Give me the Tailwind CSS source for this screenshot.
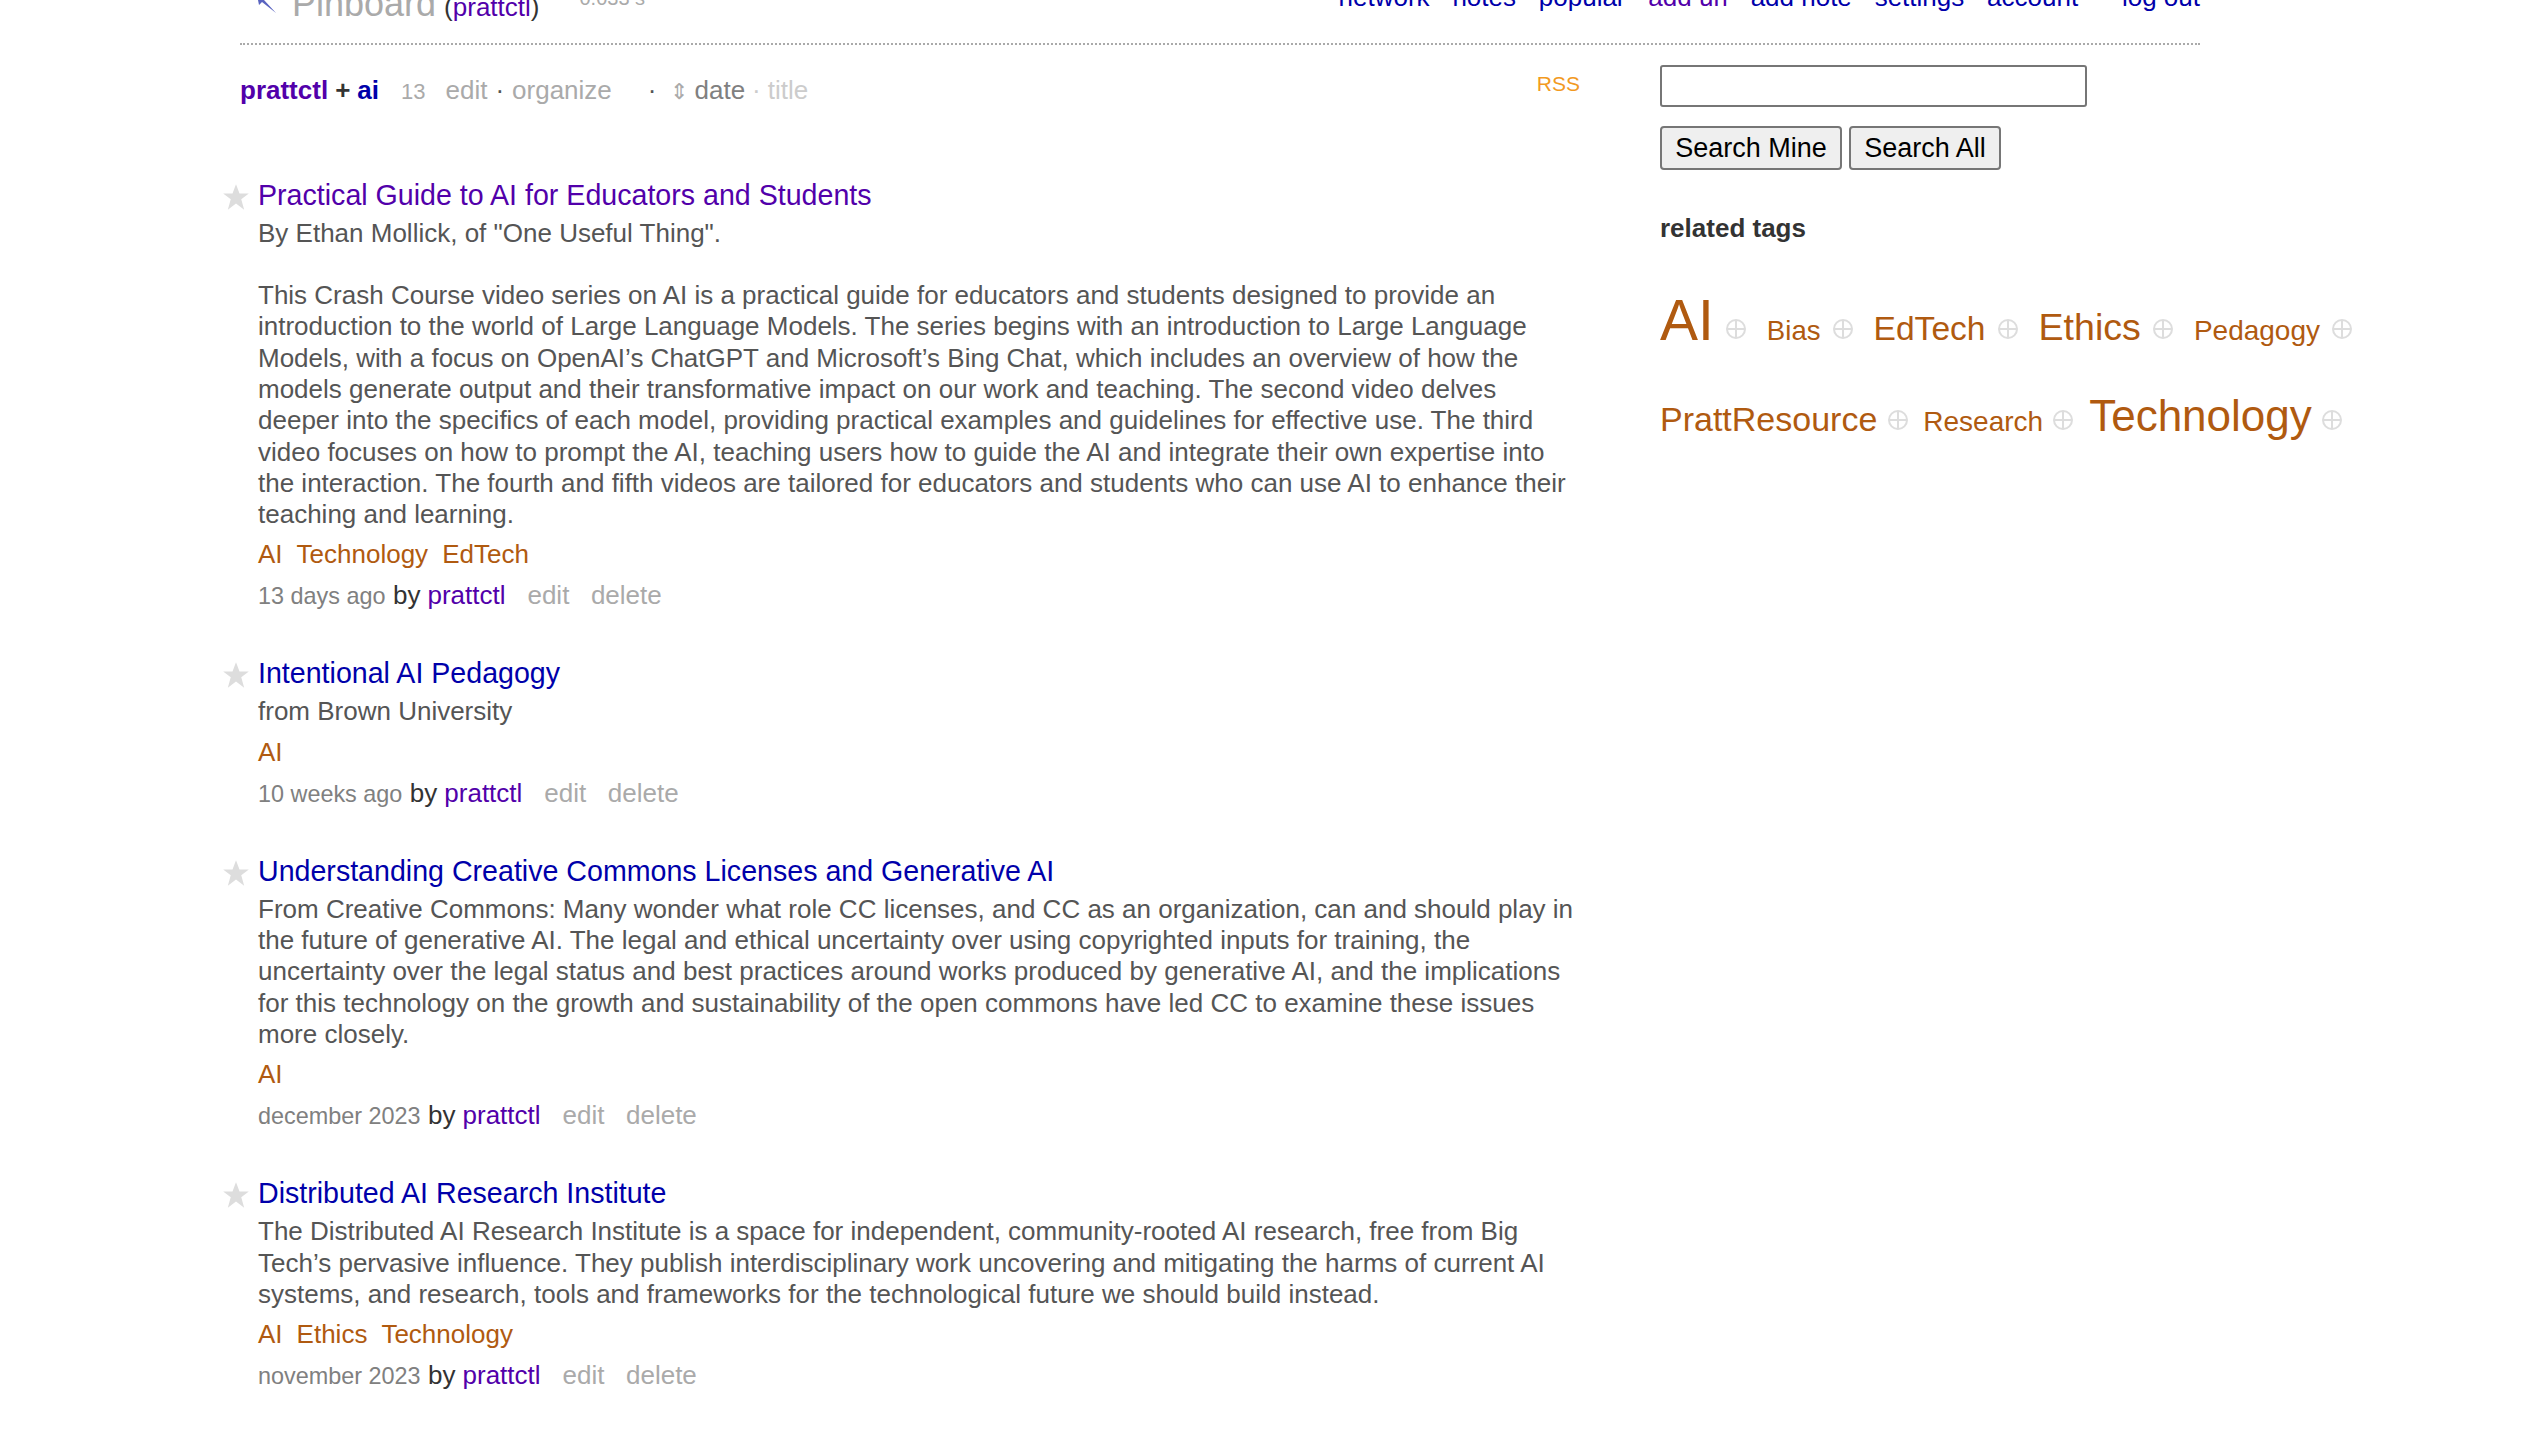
<!DOCTYPE html>
<html lang="en">
<head>
    <meta charset="UTF-8">
    <title>Pinboard (prattctl)</title>
    <script src="https://cdn.jsdelivr.net/npm/@tailwindcss/browser@4"></script>
</head>
<body class="bg-white text-[#555] font-['Liberation_Sans',Arial,sans-serif] overflow-hidden h-[1436px]">
<div class="w-[1960px] ml-[240px] -mt-[16px]">

    <!-- banner, scrolled partly out of view -->
    <header class="h-[61px] border-b-2 border-dotted border-[#aaa] flex items-start justify-between">
        <div class="flex items-baseline mt-[2px]">
            <svg class="w-[26px] h-[26px] ml-[10px] mr-[16px] self-start mt-[1px]" viewBox="0 0 26 26"><path d="M10 4 L12 9 L17 10 L14 13 L26 26 L12 15 L9 18 L8 13 L3 11 L8 9 Z" fill="#5a64c0"/></svg>
            <span class="text-[36px] leading-[36px] text-[#aaa]">Pinboard</span>
            <span class="text-[26px] ml-[8px] text-[#333]">(<a class="text-[#5200aa]">prattctl</a>)</span>
            <span class="text-[20px] ml-[40px] text-[#aaa] -translate-y-[11px]">0.033 s</span>
        </div>
        <nav class="flex gap-[22.8px] -mt-[5px] text-[26px] leading-[36px] text-[#0000aa]">
            <a>network</a><a>notes</a><a>popular</a><a class="text-[#5200aa]">add url</a><a>add note</a><a>settings</a><a>account</a><a class="ml-[21px]">log out</a>
        </nav>
    </header>

    <div class="flex">
        <main class="w-[1340px] shrink-0">
            <div class="flex items-baseline h-[127.5px] pt-[29px] text-[26px] leading-[32px]">
                <a class="font-bold text-[#5200aa]">prattctl</a>
                <span class="font-bold text-[#333] mx-[7px]">+</span>
                <a class="font-bold text-[#0000aa]">ai</a>
                <span class="text-[22px] text-[#aaa] ml-[22px]">13</span>
                <a class="text-[#aaa] ml-[20px]">edit</a>
                <span class="mx-[8px]">·</span>
                <a class="text-[#aaa]">organize</a>
                <span class="ml-[36px] mr-[14px]">·</span>
                <span class="text-[22px] text-[#aaa] mr-[6px]">⇕</span>
                <a class="text-[#808080]">date</a>
                <span class="text-[#ccc] mx-[7px]">·</span>
                <a class="text-[#ccc]">title</a>
                <a class="ml-auto text-[21px] text-[#f29a1f] -translate-y-[8px]">RSS</a>
            </div>

            <article class="relative pl-[18px] pb-[39px]">
                <svg class="absolute -left-[18px] top-[10px] w-[28px] h-[28px]" viewBox="0 0 24 24"><path d="M12 1 L15 9 L23 9 L16.5 14 L19 23 L12 17.5 L5 23 L7.5 14 L1 9 L9 9 Z" fill="#ddd"/></svg>
                <a class="block text-[28.6px] leading-[45px] text-[#5200aa]">Practical Guide to AI for Educators and Students</a>
                <p class="text-[26px] leading-[31.3px]">By Ethan Mollick, of "One Useful Thing".<br><br>This Crash Course video series on AI is a practical guide for educators and students designed to provide an introduction to the world of Large Language Models. The series begins with an introduction to Large Language Models, with a focus on OpenAI’s ChatGPT and Microsoft’s Bing Chat, which includes an overview of how the models generate output and their transformative impact on our work and teaching. The second video delves deeper into the specifics of each model, providing practical examples and guidelines for effective use. The third video focuses on how to prompt the AI, teaching users how to guide the AI and integrate their own expertise into the interaction. The fourth and fifth videos are tailored for educators and students who can use AI to enhance their teaching and learning.</p>
                <div class="flex gap-[14px] mt-[8px] text-[26px] leading-[32px] text-[#b05a10]"><a>AI</a><a>Technology</a><a>EdTech</a></div>
                <div class="flex items-baseline mt-[9px] text-[26px] leading-[32px]"><span class="text-[23.4px] text-[#808080]">13 days ago</span><span class="text-[#333] ml-[7.5px]">by</span><a class="text-[#5200aa] ml-[7px]">prattctl</a><a class="text-[#aaa] ml-[22px]">edit</a><a class="text-[#aaa] ml-[21.5px]">delete</a></div>
            </article>

            <article class="relative pl-[18px] pb-[39px]">
                <svg class="absolute -left-[18px] top-[10px] w-[28px] h-[28px]" viewBox="0 0 24 24"><path d="M12 1 L15 9 L23 9 L16.5 14 L19 23 L12 17.5 L5 23 L7.5 14 L1 9 L9 9 Z" fill="#ddd"/></svg>
                <a class="block text-[28.6px] leading-[45px] text-[#0000aa]">Intentional AI Pedagogy</a>
                <p class="text-[26px] leading-[31.3px]">from Brown University</p>
                <div class="flex gap-[14px] mt-[8px] text-[26px] leading-[32px] text-[#b05a10]"><a>AI</a></div>
                <div class="flex items-baseline mt-[9px] text-[26px] leading-[32px]"><span class="text-[23.4px] text-[#808080]">10 weeks ago</span><span class="text-[#333] ml-[7.5px]">by</span><a class="text-[#5200aa] ml-[7px]">prattctl</a><a class="text-[#aaa] ml-[22px]">edit</a><a class="text-[#aaa] ml-[21.5px]">delete</a></div>
            </article>

            <article class="relative pl-[18px] pb-[39px]">
                <svg class="absolute -left-[18px] top-[10px] w-[28px] h-[28px]" viewBox="0 0 24 24"><path d="M12 1 L15 9 L23 9 L16.5 14 L19 23 L12 17.5 L5 23 L7.5 14 L1 9 L9 9 Z" fill="#ddd"/></svg>
                <a class="block text-[28.6px] leading-[45px] text-[#0000aa]">Understanding Creative Commons Licenses and Generative AI</a>
                <p class="text-[26px] leading-[31.3px]">From Creative Commons: Many wonder what role CC licenses, and CC as an organization, can and should play in the future of generative AI. The legal and ethical uncertainty over using copyrighted inputs for training, the uncertainty over the legal status and best practices around works produced by generative AI, and the implications for this technology on the growth and sustainability of the open commons have led CC to examine these issues more closely.</p>
                <div class="flex gap-[14px] mt-[8px] text-[26px] leading-[32px] text-[#b05a10]"><a>AI</a></div>
                <div class="flex items-baseline mt-[9px] text-[26px] leading-[32px]"><span class="text-[23.4px] text-[#808080]">december 2023</span><span class="text-[#333] ml-[7.5px]">by</span><a class="text-[#5200aa] ml-[7px]">prattctl</a><a class="text-[#aaa] ml-[22px]">edit</a><a class="text-[#aaa] ml-[21.5px]">delete</a></div>
            </article>

            <article class="relative pl-[18px] pb-[39px]">
                <svg class="absolute -left-[18px] top-[10px] w-[28px] h-[28px]" viewBox="0 0 24 24"><path d="M12 1 L15 9 L23 9 L16.5 14 L19 23 L12 17.5 L5 23 L7.5 14 L1 9 L9 9 Z" fill="#ddd"/></svg>
                <a class="block text-[28.6px] leading-[45px] text-[#0000aa]">Distributed AI Research Institute</a>
                <p class="text-[26px] leading-[31.3px]">The Distributed AI Research Institute is a space for independent, community-rooted AI research, free from Big Tech’s pervasive influence. They publish interdisciplinary work uncovering and mitigating the harms of current AI systems, and research, tools and frameworks for the technological future we should build instead.</p>
                <div class="flex gap-[14px] mt-[8px] text-[26px] leading-[32px] text-[#b05a10]"><a>AI</a><a>Ethics</a><a>Technology</a></div>
                <div class="flex items-baseline mt-[9px] text-[26px] leading-[32px]"><span class="text-[23.4px] text-[#808080]">november 2023</span><span class="text-[#333] ml-[7.5px]">by</span><a class="text-[#5200aa] ml-[7px]">prattctl</a><a class="text-[#aaa] ml-[22px]">edit</a><a class="text-[#aaa] ml-[21.5px]">delete</a></div>
            </article>
        </main>

        <aside class="ml-[80px] w-[720px] shrink-0 pt-[20px]">
            <input class="block w-[427px] h-[42px] border-2 border-[#767676] rounded-[3px] bg-white">
            <div class="flex gap-[7px] mt-[19px]">
                <button class="w-[182px] h-[44px] border-2 border-[#767676] rounded-[4px] bg-[#efefef] text-black text-[27px]">Search Mine</button>
                <button class="w-[152px] h-[44px] border-2 border-[#767676] rounded-[4px] bg-[#efefef] text-black text-[27px]">Search All</button>
            </div>
            <h3 class="mt-[42px] text-[26px] leading-[32px] font-bold text-[#333]">related tags</h3>
            <div class="flex flex-wrap items-baseline text-[#b05a10] mt-[33.5px] leading-[85px]">
                <a class="text-[57px]">AI</a><svg class="w-[20px] h-[20px] ml-[12px] mr-[21px] -translate-y-[1px]" viewBox="0 0 20 20" fill="none" stroke="#ddd" stroke-width="2"><circle cx="10" cy="10" r="9"/><path d="M10 1V19M1 10H19"/></svg>
                <a class="text-[27.6px]">Bias</a><svg class="w-[20px] h-[20px] ml-[12px] mr-[21px] -translate-y-[1px]" viewBox="0 0 20 20" fill="none" stroke="#ddd" stroke-width="2"><circle cx="10" cy="10" r="9"/><path d="M10 1V19M1 10H19"/></svg>
                <a class="text-[33.6px]">EdTech</a><svg class="w-[20px] h-[20px] ml-[12px] mr-[21px] -translate-y-[1px]" viewBox="0 0 20 20" fill="none" stroke="#ddd" stroke-width="2"><circle cx="10" cy="10" r="9"/><path d="M10 1V19M1 10H19"/></svg>
                <a class="text-[37.6px]">Ethics</a><svg class="w-[20px] h-[20px] ml-[12px] mr-[21px] -translate-y-[1px]" viewBox="0 0 20 20" fill="none" stroke="#ddd" stroke-width="2"><circle cx="10" cy="10" r="9"/><path d="M10 1V19M1 10H19"/></svg>
                <a class="text-[28px]">Pedagogy</a><svg class="w-[20px] h-[20px] ml-[12px] mr-[21px] -translate-y-[1px]" viewBox="0 0 20 20" fill="none" stroke="#ddd" stroke-width="2"><circle cx="10" cy="10" r="9"/><path d="M10 1V19M1 10H19"/></svg>
                <a class="text-[34px]">PrattResource</a><svg class="w-[20px] h-[20px] ml-[11px] mr-[15px] -translate-y-[1px]" viewBox="0 0 20 20" fill="none" stroke="#ddd" stroke-width="2"><circle cx="10" cy="10" r="9"/><path d="M10 1V19M1 10H19"/></svg>
                <a class="text-[28px]">Research</a><svg class="w-[20px] h-[20px] ml-[10px] mr-[16px] -translate-y-[1px]" viewBox="0 0 20 20" fill="none" stroke="#ddd" stroke-width="2"><circle cx="10" cy="10" r="9"/><path d="M10 1V19M1 10H19"/></svg>
                <a class="text-[44px]">Technology</a><svg class="w-[20px] h-[20px] ml-[10px] -translate-y-[1px]" viewBox="0 0 20 20" fill="none" stroke="#ddd" stroke-width="2"><circle cx="10" cy="10" r="9"/><path d="M10 1V19M1 10H19"/></svg>
            </div>
        </aside>
    </div>
</div>
</body>
</html>
